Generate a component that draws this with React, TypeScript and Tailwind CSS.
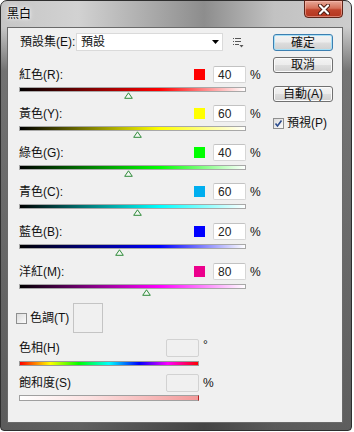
import React from 'react';

interface Channel {
  label: string;
  color: string;
  swatch: string;
  value: number;
  rowH: string;
}

const CHANNELS: Channel[] = [
  { label: '紅色(R):', color: '#ff0000', swatch: '#ff0000', value: 40, rowH: 'h-[39px]' },
  { label: '黃色(Y):', color: '#ffff00', swatch: '#ffff00', value: 60, rowH: 'h-[39px]' },
  { label: '綠色(G):', color: '#00ff00', swatch: '#00ff00', value: 40, rowH: 'h-[39px]' },
  { label: '青色(C):', color: '#00ffff', swatch: '#00aeef', value: 60, rowH: 'h-[40px]' },
  { label: '藍色(B):', color: '#0000ff', swatch: '#0000ff', value: 20, rowH: 'h-[40px]' },
  { label: '洋紅(M):', color: '#ff00ff', swatch: '#ec008c', value: 80, rowH: 'h-[40px]' },
];

const BAR_W = 225; // inner width of slider track

function Thumb({ value }: { value: number }) {
  // photoshop range is -200..300
  const x = ((value + 200) / 500) * BAR_W;
  return (
    <svg
      className="absolute top-[4px]"
      style={{ left: x - 4.5 }}
      width="9"
      height="7"
      viewBox="0 0 9 7"
    >
      <polygon points="4.5,0.8 8.3,6.3 0.7,6.3" fill="#f4f8f4" stroke="#2f8a3a" strokeWidth="1" />
    </svg>
  );
}

function ChannelRow({ ch }: { ch: Channel }) {
  return (
    <div className={`flex flex-col ${ch.rowH}`}>
      <div className="flex h-[17px] w-[242px] items-center">
        <span className="flex-1">{ch.label}</span>
        <span className="mr-[8px] h-[11px] w-[11px]" style={{ background: ch.swatch }} />
        <div className="flex h-[17px] w-[33px] items-center rounded-[2px] border border-[#d6d6d6] border-t-[#c2c2c2] bg-white pl-[4px] text-[#222]">
          {ch.value}
        </div>
        <span className="w-[15px] pl-[4px]">%</span>
      </div>
      <div
        className="relative mt-[4px] h-[5px] w-[227px] border border-[#a8a8a8]"
        style={{
          background: `linear-gradient(to right, #000 0%, ${ch.color} 62%, #fff 100%)`,
        }}
      >
        <Thumb value={ch.value} />
      </div>
    </div>
  );
}

function WinButton({ label, isDefault }: { label: string; isDefault?: boolean }) {
  return (
    <div
      className={`flex w-[60px] items-center justify-center rounded-[3px] border bg-[linear-gradient(to_bottom,#f3f3f3_0%,#ececec_48%,#dddddd_52%,#d0d0d0_100%)] ${
        isDefault
          ? 'h-[17px] border-[#3c7fb1] shadow-[inset_0_0_0_1px_#a8e0f6]'
          : 'h-[16px] border-[#707070] shadow-[inset_0_0_0_1px_#fbfbfb]'
      }`}
    >
      {label}
    </div>
  );
}

export default function App() {
  return (
    <div className="h-[432px] w-[354px] bg-white font-['Liberation_Sans','Noto_Sans_CJK_TC',sans-serif] text-[12px] leading-none text-[#111]">
      {/* window frame */}
      <div className="flex h-[431px] w-[352px] flex-col rounded-t-[7px] rounded-b-[4px] border border-[#2e2e2e] bg-[linear-gradient(to_bottom,rgba(0,0,0,0)_0px,rgba(0,0,0,0)_26px,rgba(30,30,30,0.5)_70px,rgba(20,20,20,0.6)_100%),linear-gradient(to_right,#c6c6c6_0%,#d2d2d2_22%,#a6a6a6_45%,#8d8d8d_58%,#c2c2c2_78%,#cdcdcd_100%)] pl-[6px] pr-[8px] pb-[7px]">
        {/* title bar */}
        <div className="flex h-[26px] items-start justify-between">
          <span className="mt-[7px] text-[12px] text-black [text-shadow:0_0_6px_#ffffff,0_0_3px_#ffffff]">黑白</span>
          <div className="-mt-px flex h-[18px] w-[39px] items-center justify-center rounded-b-[4px] border border-[#5e2418] bg-[linear-gradient(to_bottom,#e8a898_0%,#d5715a_45%,#c0432b_55%,#b3361f_100%)] shadow-[inset_0_0_0_1px_rgba(255,200,190,0.5)]">
            <svg width="12" height="11" viewBox="0 0 12 11">
              <path d="M2 1.5 L10 9.5 M10 1.5 L2 9.5" stroke="#4a1a10" strokeWidth="4" strokeLinecap="round" />
              <path d="M2 1.5 L10 9.5 M10 1.5 L2 9.5" stroke="#ffffff" strokeWidth="2.2" strokeLinecap="round" />
            </svg>
          </div>
        </div>

        {/* client area */}
        <div className="flex h-[396px] w-[336px] border border-[#6a6a6a] bg-[#f0f0f0]">
          {/* left column */}
          <div className="flex w-[253px] flex-col pl-[11px] pt-[5px]">
            {/* preset row */}
            <div className="flex h-[18px] items-center">
              <span className="w-[57px] pl-px">預設集(E):</span>
              <div className="flex h-[18px] w-[147px] items-center justify-between border border-[#dadada] bg-white pl-[4px] pr-[3px]">
                <span>預設</span>
                <svg width="7" height="4" viewBox="0 0 7 4">
                  <polygon points="0,0 7,0 3.5,4" fill="#000" />
                </svg>
              </div>
              <svg className="ml-[10px] mt-[1px]" width="11" height="10" viewBox="0 0 11 10">
                <rect x="0" y="0" width="1" height="1" fill="#555" />
                <rect x="2" y="0" width="6" height="1" fill="#555" />
                <rect x="0" y="3" width="1" height="1" fill="#555" />
                <rect x="2" y="3" width="6" height="1" fill="#555" />
                <rect x="0" y="6" width="1" height="1" fill="#555" />
                <rect x="2" y="6" width="4" height="1" fill="#555" />
                <polygon points="6.5,7 10.5,7 8.5,9.5" fill="#555" />
              </svg>
            </div>

            {/* channel sliders */}
            <div className="mt-[15px] flex flex-col">
              {CHANNELS.map((ch) => (
                <ChannelRow key={ch.label} ch={ch} />
              ))}
            </div>

            {/* tint */}
            <div className="flex h-[30px] items-center">
              <div className="-ml-[3px] flex w-[57px] items-center">
                <span className="h-[11px] w-[11px] border border-[#8e8f8f] bg-[linear-gradient(135deg,#dcdcdc,#fbfbfb)]" />
                <span className="ml-[3px]">色調(T)</span>
              </div>
              <div className="h-[30px] w-[30px] border border-[#c4c4c4] bg-[#f0f0f0]" />
            </div>

            {/* hue */}
            <div className="mt-[6px] flex h-[18px] w-[195px] items-center">
              <span className="flex-1">色相(H)</span>
              <div className="h-[18px] w-[33px] rounded-[2px] border border-[#d2d2d2] bg-[#f0f0f0]" />
              <span className="mb-[6px] w-[15px] pl-[4px]">°</span>
            </div>
            <div className="mt-[4px] h-[5px] w-[180px] border border-[#9a9a9a] bg-[linear-gradient(to_right,#ff0000_0%,#ffff00_17%,#00ff00_33%,#00ffff_50%,#0000ff_67%,#ff00ff_83%,#ff0000_100%)]" />

            {/* saturation */}
            <div className="mt-[8px] flex h-[18px] w-[195px] items-center">
              <span className="flex-1">飽和度(S)</span>
              <div className="h-[18px] w-[33px] rounded-[2px] border border-[#d2d2d2] bg-[#f0f0f0]" />
              <span className="w-[15px] pl-[4px]">%</span>
            </div>
            <div className="mt-[3px] h-[6px] w-[180px] border border-[#a0a0a0] border-r-[#b02020] bg-[linear-gradient(to_right,#ffffff_0%,#fbe0e0_40%,#f39a9a_100%)]" />
          </div>

          {/* right column */}
          <div className="flex flex-col pl-[12px] pt-[6px]">
            <WinButton label="確定" isDefault />
            <div className="mt-[6px]">
              <WinButton label="取消" />
            </div>
            <div className="mt-[13px]">
              <WinButton label="自動(A)" />
            </div>
            <div className="mt-[15px] flex items-center">
              <span className="flex h-[11px] w-[11px] items-center justify-center border border-[#8e8f8f] bg-[linear-gradient(135deg,#dcdcdc,#fbfbfb)]">
                <svg width="9" height="9" viewBox="0 0 9 9">
                  <path d="M1.5 4.5 L3.5 7 L7.5 1.5" fill="none" stroke="#2a4b8d" strokeWidth="1.6" />
                </svg>
              </span>
              <span className="ml-[3px]">預視(P)</span>
            </div>
          </div>
        </div>
      </div>
    </div>
  );
}
